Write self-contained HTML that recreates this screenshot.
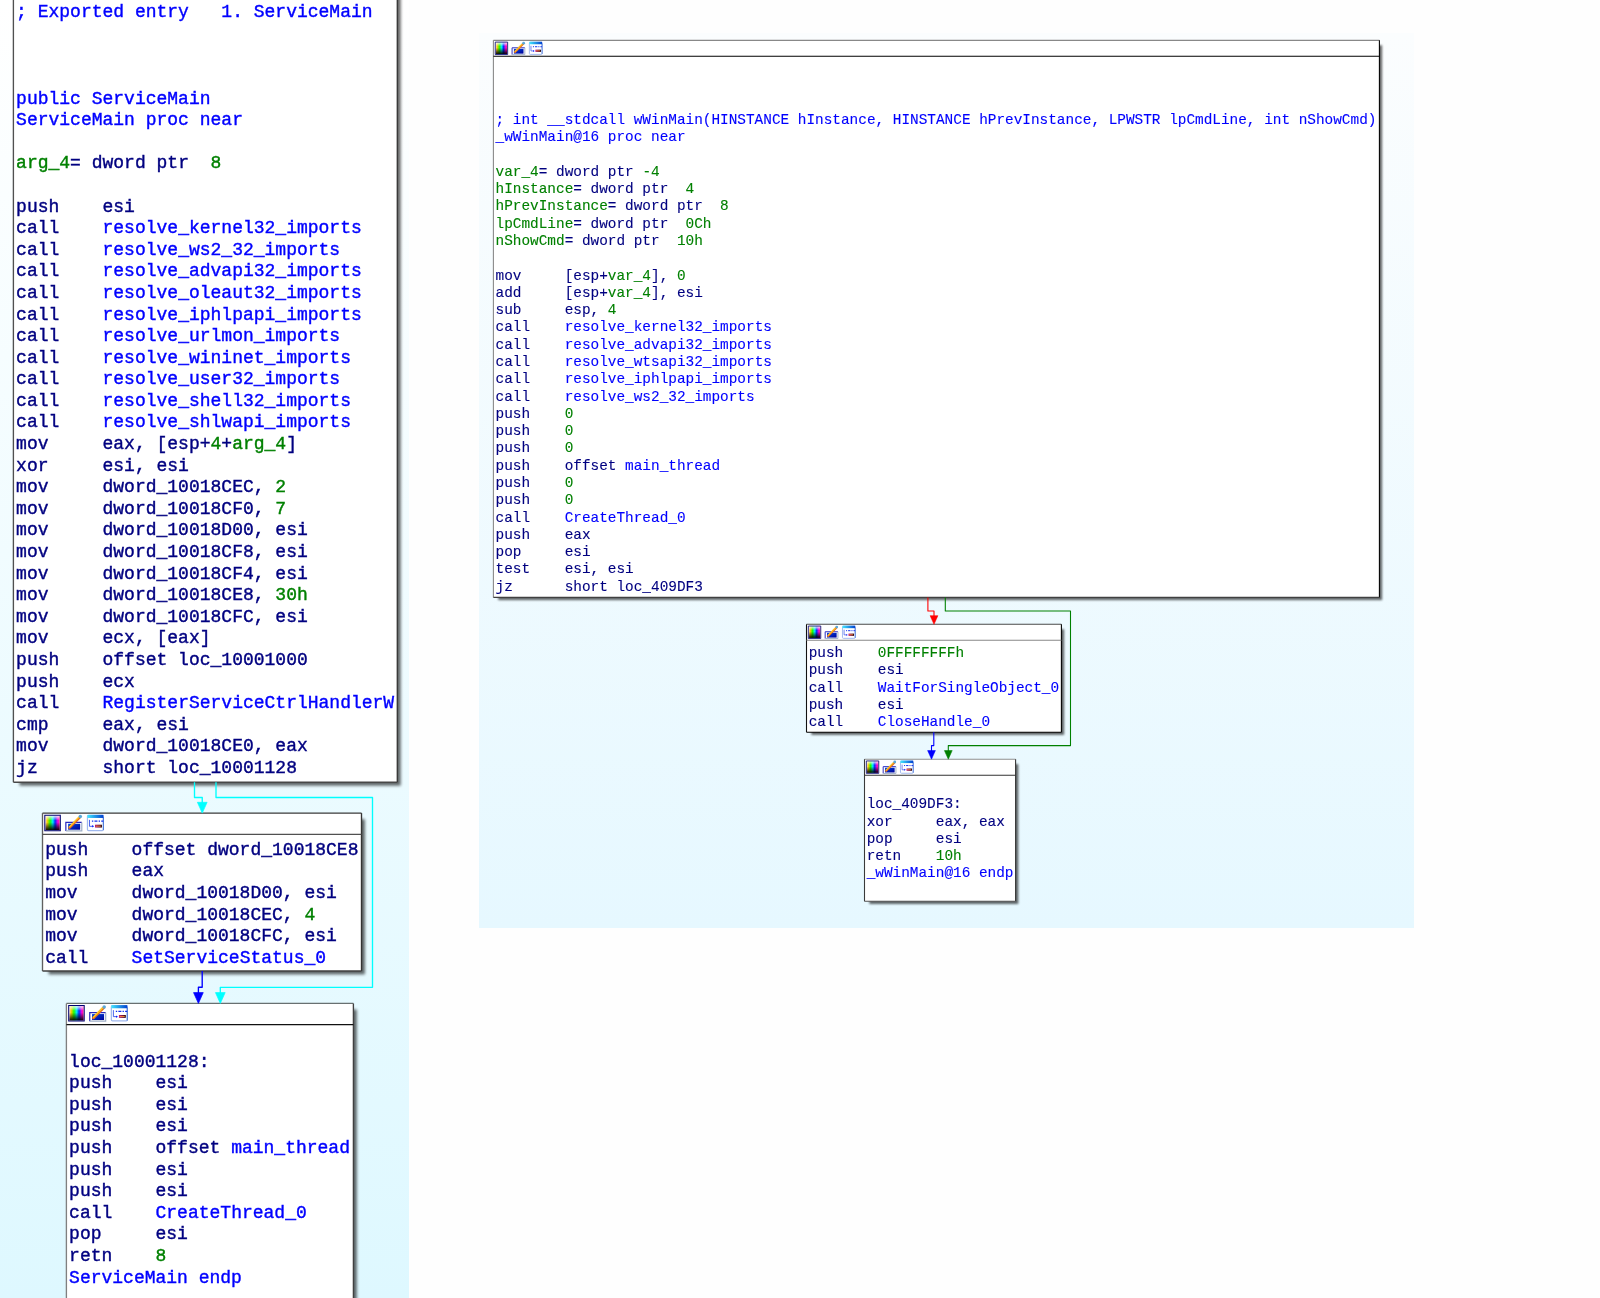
<!DOCTYPE html>
<html><head><meta charset="utf-8"><title>IDA graph</title>
<style>
html,body{margin:0;padding:0;}
body{width:1600px;height:1298px;overflow:hidden;background:#fefefe;position:relative;}
svg{position:absolute;left:0;top:0;}
.t{position:absolute;white-space:pre;font-family:"Liberation Mono",monospace;color:#000080;}
.bl{filter:blur(0.35px);}
.br{filter:blur(0.25px);}
</style></head><body>
<svg width="1600" height="1298" viewBox="0 0 1600 1298">
<defs>
<linearGradient id="hue" x1="0" y1="0" x2="1" y2="0">
<stop offset="0" stop-color="#f8d8c0"/><stop offset="0.12" stop-color="#ffd000"/><stop offset="0.32" stop-color="#20ff00"/>
<stop offset="0.52" stop-color="#00e8ff"/><stop offset="0.68" stop-color="#0030ff"/><stop offset="0.88" stop-color="#ff00e0"/><stop offset="1" stop-color="#ff2080"/>
</linearGradient>
<linearGradient id="shade" x1="0" y1="0" x2="0" y2="1">
<stop offset="0" stop-color="#fff" stop-opacity="0.85"/><stop offset="0.32" stop-color="#fff" stop-opacity="0"/><stop offset="0.45" stop-color="#000" stop-opacity="0"/><stop offset="1" stop-color="#000" stop-opacity="0.95"/>
</linearGradient>
<linearGradient id="editfill" x1="0" y1="0" x2="1" y2="1"><stop offset="0" stop-color="#0048e0"/><stop offset="1" stop-color="#000098"/></linearGradient>
<linearGradient id="titlebar" x1="0" y1="0" x2="1" y2="0"><stop offset="0" stop-color="#40e8ff"/><stop offset="1" stop-color="#0040d0"/></linearGradient>
<linearGradient id="barfill" x1="0" y1="0" x2="1" y2="0"><stop offset="0" stop-color="#c01080"/><stop offset="1" stop-color="#200000"/></linearGradient>
<filter id="blurL" x="-10%" y="-10%" width="120%" height="120%"><feGaussianBlur stdDeviation="1.35"/></filter>
<filter id="blurR" x="-10%" y="-10%" width="120%" height="120%"><feGaussianBlur stdDeviation="1.08"/></filter>
<linearGradient id="gl" x1="0" y1="0" x2="0" y2="1"><stop offset="0" stop-color="#ffffff"/><stop offset="1" stop-color="#def8ff"/></linearGradient>
<linearGradient id="gr" x1="0" y1="0" x2="0" y2="1"><stop offset="0" stop-color="#fbfdfe"/><stop offset="1" stop-color="#e6f8ff"/></linearGradient>
</defs>
<rect x="0" y="0" width="409" height="1298" fill="url(#gl)"/>
<rect x="479" y="33" width="935" height="895" fill="url(#gr)"/>
<rect x="19.48" y="-13.93" width="381.20" height="799.55" fill="#000" opacity="0.6" filter="url(#blurL)"/>
<rect x="13.40" y="-20.00" width="383.90" height="802.25" fill="#fff"/>
<path d="M13.40 -20.00 H397.30" stroke="#181818" stroke-width="1.35"/>
<path d="M13.40 -20.00 V782.25" stroke="#505050" stroke-width="1.35"/>
<path d="M397.30 -20.00 V782.25" stroke="#383838" stroke-width="1.35"/>
<path d="M13.40 782.25 H397.30" stroke="#484848" stroke-width="1.35"/>
<path d="M13.40 -5.00 H397.30" stroke="#181818" stroke-width="1.35"/>
<g transform="translate(13.40 -20.00) scale(1.3500)"><rect x="2.2" y="2.1" width="10.5" height="10.5" fill="url(#hue)"/><rect x="2.2" y="2.1" width="10.5" height="10.5" fill="url(#shade)"/><path d="M1.7 1.6 H13.2 V13.1 H1.7 Z" fill="none" stroke="#000070" stroke-width="0.75"/><rect x="17.3" y="6.9" width="12" height="6.4" fill="#ffffff"/><path d="M17.3 13.2 V6.9 H29.1" fill="none" stroke="#2828c0" stroke-width="0.9"/><path d="M29.1 6.9 V13.2 H17.3" fill="none" stroke="#a0b0c8" stroke-width="0.9"/><rect x="19.0" y="7.9" width="8.9" height="4.4" fill="url(#editfill)"/><path d="M20.0 10.8 L27.6 3.2" stroke="#e86a20" stroke-width="1.9" stroke-linecap="round"/><path d="M19.8 10.4 L27.0 3.0" stroke="#ffd020" stroke-width="1.0"/><circle cx="28.0" cy="2.6" r="1.3" fill="#5aa8d8"/><rect x="33.3" y="1.7" width="11.8" height="11.3" rx="0.8" fill="#ffffff" stroke="#a0b8ee" stroke-width="0.9"/><path d="M45.1 3 V12.6" stroke="#4a78d8" stroke-width="0.8"/><rect x="33.3" y="1.3" width="11.8" height="2.3" fill="url(#titlebar)"/><path d="M34.8 5.0 V9.8 H37.2" fill="none" stroke="#2040e8" stroke-width="0.6"/><path d="M36.8 8.9 L38.2 9.8 L36.8 10.7 Z" fill="#0010ff"/><path d="M36.6 5.9 H45" fill="none" stroke="#1030f0" stroke-width="0.9" stroke-dasharray="1.0 0.9 2.2 0.9"/><rect x="38.9" y="8.6" width="5.1" height="2.1" fill="url(#barfill)"/><path d="M39.4 9.65 H43.2" stroke="#f89838" stroke-width="0.7"/></g>
<rect x="48.58" y="819.18" width="316.30" height="155.20" fill="#000" opacity="0.6" filter="url(#blurL)"/>
<rect x="42.50" y="813.10" width="319.00" height="157.90" fill="#fff"/>
<path d="M42.50 813.10 H361.50" stroke="#3a3a3a" stroke-width="1.35"/>
<path d="M42.50 813.10 V971.00" stroke="#606060" stroke-width="1.35"/>
<path d="M361.50 813.10 V971.00" stroke="#333333" stroke-width="1.35"/>
<path d="M42.50 971.00 H361.50" stroke="#404040" stroke-width="1.35"/>
<path d="M42.50 834.40 H361.50" stroke="#505050" stroke-width="1.35"/>
<g transform="translate(42.50 813.10) scale(1.3500)"><rect x="2.2" y="2.1" width="10.5" height="10.5" fill="url(#hue)"/><rect x="2.2" y="2.1" width="10.5" height="10.5" fill="url(#shade)"/><path d="M1.7 1.6 H13.2 V13.1 H1.7 Z" fill="none" stroke="#000070" stroke-width="0.75"/><rect x="17.3" y="6.9" width="12" height="6.4" fill="#ffffff"/><path d="M17.3 13.2 V6.9 H29.1" fill="none" stroke="#2828c0" stroke-width="0.9"/><path d="M29.1 6.9 V13.2 H17.3" fill="none" stroke="#a0b0c8" stroke-width="0.9"/><rect x="19.0" y="7.9" width="8.9" height="4.4" fill="url(#editfill)"/><path d="M20.0 10.8 L27.6 3.2" stroke="#e86a20" stroke-width="1.9" stroke-linecap="round"/><path d="M19.8 10.4 L27.0 3.0" stroke="#ffd020" stroke-width="1.0"/><circle cx="28.0" cy="2.6" r="1.3" fill="#5aa8d8"/><rect x="33.3" y="1.7" width="11.8" height="11.3" rx="0.8" fill="#ffffff" stroke="#a0b8ee" stroke-width="0.9"/><path d="M45.1 3 V12.6" stroke="#4a78d8" stroke-width="0.8"/><rect x="33.3" y="1.3" width="11.8" height="2.3" fill="url(#titlebar)"/><path d="M34.8 5.0 V9.8 H37.2" fill="none" stroke="#2040e8" stroke-width="0.6"/><path d="M36.8 8.9 L38.2 9.8 L36.8 10.7 Z" fill="#0010ff"/><path d="M36.6 5.9 H45" fill="none" stroke="#1030f0" stroke-width="0.9" stroke-dasharray="1.0 0.9 2.2 0.9"/><rect x="38.9" y="8.6" width="5.1" height="2.1" fill="url(#barfill)"/><path d="M39.4 9.65 H43.2" stroke="#f89838" stroke-width="0.7"/></g>
<rect x="72.48" y="1009.48" width="284.30" height="313.90" fill="#000" opacity="0.6" filter="url(#blurL)"/>
<rect x="66.40" y="1003.40" width="287.00" height="316.60" fill="#fff"/>
<path d="M66.40 1003.40 H353.40" stroke="#687070" stroke-width="1.35"/>
<path d="M66.40 1003.40 V1320.00" stroke="#808080" stroke-width="1.35"/>
<path d="M353.40 1003.40 V1320.00" stroke="#404040" stroke-width="1.35"/>
<path d="M66.40 1320.00 H353.40" stroke="#181818" stroke-width="1.35"/>
<path d="M66.40 1024.60 H353.40" stroke="#111111" stroke-width="1.35"/>
<g transform="translate(66.40 1003.40) scale(1.3500)"><rect x="2.2" y="2.1" width="10.5" height="10.5" fill="url(#hue)"/><rect x="2.2" y="2.1" width="10.5" height="10.5" fill="url(#shade)"/><path d="M1.7 1.6 H13.2 V13.1 H1.7 Z" fill="none" stroke="#000070" stroke-width="0.75"/><rect x="17.3" y="6.9" width="12" height="6.4" fill="#ffffff"/><path d="M17.3 13.2 V6.9 H29.1" fill="none" stroke="#2828c0" stroke-width="0.9"/><path d="M29.1 6.9 V13.2 H17.3" fill="none" stroke="#a0b0c8" stroke-width="0.9"/><rect x="19.0" y="7.9" width="8.9" height="4.4" fill="url(#editfill)"/><path d="M20.0 10.8 L27.6 3.2" stroke="#e86a20" stroke-width="1.9" stroke-linecap="round"/><path d="M19.8 10.4 L27.0 3.0" stroke="#ffd020" stroke-width="1.0"/><circle cx="28.0" cy="2.6" r="1.3" fill="#5aa8d8"/><rect x="33.3" y="1.7" width="11.8" height="11.3" rx="0.8" fill="#ffffff" stroke="#a0b8ee" stroke-width="0.9"/><path d="M45.1 3 V12.6" stroke="#4a78d8" stroke-width="0.8"/><rect x="33.3" y="1.3" width="11.8" height="2.3" fill="url(#titlebar)"/><path d="M34.8 5.0 V9.8 H37.2" fill="none" stroke="#2040e8" stroke-width="0.6"/><path d="M36.8 8.9 L38.2 9.8 L36.8 10.7 Z" fill="#0010ff"/><path d="M36.6 5.9 H45" fill="none" stroke="#1030f0" stroke-width="0.9" stroke-dasharray="1.0 0.9 2.2 0.9"/><rect x="38.9" y="8.6" width="5.1" height="2.1" fill="url(#barfill)"/><path d="M39.4 9.65 H43.2" stroke="#f89838" stroke-width="0.7"/></g>
<rect x="498.26" y="45.22" width="883.84" height="554.88" fill="#000" opacity="0.6" filter="url(#blurR)"/>
<rect x="493.40" y="40.36" width="886.00" height="557.04" fill="#fff"/>
<path d="M493.40 40.36 H1379.40" stroke="#888888" stroke-width="1.08"/>
<path d="M493.40 40.36 V597.40" stroke="#888888" stroke-width="1.08"/>
<path d="M1379.40 40.36 V597.40" stroke="#000000" stroke-width="1.08"/>
<path d="M493.40 597.40 H1379.40" stroke="#404040" stroke-width="1.08"/>
<path d="M493.40 56.30 H1379.40" stroke="#000000" stroke-width="1.08"/>
<g transform="translate(493.40 40.36) scale(1.0800)"><rect x="2.2" y="2.1" width="10.5" height="10.5" fill="url(#hue)"/><rect x="2.2" y="2.1" width="10.5" height="10.5" fill="url(#shade)"/><path d="M1.7 1.6 H13.2 V13.1 H1.7 Z" fill="none" stroke="#000070" stroke-width="0.75"/><rect x="17.3" y="6.9" width="12" height="6.4" fill="#ffffff"/><path d="M17.3 13.2 V6.9 H29.1" fill="none" stroke="#2828c0" stroke-width="0.9"/><path d="M29.1 6.9 V13.2 H17.3" fill="none" stroke="#a0b0c8" stroke-width="0.9"/><rect x="19.0" y="7.9" width="8.9" height="4.4" fill="url(#editfill)"/><path d="M20.0 10.8 L27.6 3.2" stroke="#e86a20" stroke-width="1.9" stroke-linecap="round"/><path d="M19.8 10.4 L27.0 3.0" stroke="#ffd020" stroke-width="1.0"/><circle cx="28.0" cy="2.6" r="1.3" fill="#5aa8d8"/><rect x="33.3" y="1.7" width="11.8" height="11.3" rx="0.8" fill="#ffffff" stroke="#a0b8ee" stroke-width="0.9"/><path d="M45.1 3 V12.6" stroke="#4a78d8" stroke-width="0.8"/><rect x="33.3" y="1.3" width="11.8" height="2.3" fill="url(#titlebar)"/><path d="M34.8 5.0 V9.8 H37.2" fill="none" stroke="#2040e8" stroke-width="0.6"/><path d="M36.8 8.9 L38.2 9.8 L36.8 10.7 Z" fill="#0010ff"/><path d="M36.6 5.9 H45" fill="none" stroke="#1030f0" stroke-width="0.9" stroke-dasharray="1.0 0.9 2.2 0.9"/><rect x="38.9" y="8.6" width="5.1" height="2.1" fill="url(#barfill)"/><path d="M39.4 9.65 H43.2" stroke="#f89838" stroke-width="0.7"/></g>
<rect x="811.36" y="629.16" width="252.74" height="105.74" fill="#000" opacity="0.6" filter="url(#blurR)"/>
<rect x="806.50" y="624.30" width="254.90" height="107.90" fill="#fff"/>
<path d="M806.50 624.30 H1061.40" stroke="#4a4a4a" stroke-width="1.08"/>
<path d="M806.50 624.30 V732.20" stroke="#111111" stroke-width="1.08"/>
<path d="M1061.40 624.30 V732.20" stroke="#000000" stroke-width="1.08"/>
<path d="M806.50 732.20 H1061.40" stroke="#000000" stroke-width="1.08"/>
<path d="M806.50 640.30 H1061.40" stroke="#888888" stroke-width="1.08"/>
<g transform="translate(806.50 624.30) scale(1.0800)"><rect x="2.2" y="2.1" width="10.5" height="10.5" fill="url(#hue)"/><rect x="2.2" y="2.1" width="10.5" height="10.5" fill="url(#shade)"/><path d="M1.7 1.6 H13.2 V13.1 H1.7 Z" fill="none" stroke="#000070" stroke-width="0.75"/><rect x="17.3" y="6.9" width="12" height="6.4" fill="#ffffff"/><path d="M17.3 13.2 V6.9 H29.1" fill="none" stroke="#2828c0" stroke-width="0.9"/><path d="M29.1 6.9 V13.2 H17.3" fill="none" stroke="#a0b0c8" stroke-width="0.9"/><rect x="19.0" y="7.9" width="8.9" height="4.4" fill="url(#editfill)"/><path d="M20.0 10.8 L27.6 3.2" stroke="#e86a20" stroke-width="1.9" stroke-linecap="round"/><path d="M19.8 10.4 L27.0 3.0" stroke="#ffd020" stroke-width="1.0"/><circle cx="28.0" cy="2.6" r="1.3" fill="#5aa8d8"/><rect x="33.3" y="1.7" width="11.8" height="11.3" rx="0.8" fill="#ffffff" stroke="#a0b8ee" stroke-width="0.9"/><path d="M45.1 3 V12.6" stroke="#4a78d8" stroke-width="0.8"/><rect x="33.3" y="1.3" width="11.8" height="2.3" fill="url(#titlebar)"/><path d="M34.8 5.0 V9.8 H37.2" fill="none" stroke="#2040e8" stroke-width="0.6"/><path d="M36.8 8.9 L38.2 9.8 L36.8 10.7 Z" fill="#0010ff"/><path d="M36.6 5.9 H45" fill="none" stroke="#1030f0" stroke-width="0.9" stroke-dasharray="1.0 0.9 2.2 0.9"/><rect x="38.9" y="8.6" width="5.1" height="2.1" fill="url(#barfill)"/><path d="M39.4 9.65 H43.2" stroke="#f89838" stroke-width="0.7"/></g>
<rect x="869.36" y="764.06" width="148.94" height="139.94" fill="#000" opacity="0.6" filter="url(#blurR)"/>
<rect x="864.50" y="759.20" width="151.10" height="142.10" fill="#fff"/>
<path d="M864.50 759.20 H1015.60" stroke="#909090" stroke-width="1.08"/>
<path d="M864.50 759.20 V901.30" stroke="#3a3a3a" stroke-width="1.08"/>
<path d="M1015.60 759.20 V901.30" stroke="#333333" stroke-width="1.08"/>
<path d="M864.50 901.30 H1015.60" stroke="#505050" stroke-width="1.08"/>
<path d="M864.50 775.20 H1015.60" stroke="#333333" stroke-width="1.08"/>
<g transform="translate(864.50 759.20) scale(1.0800)"><rect x="2.2" y="2.1" width="10.5" height="10.5" fill="url(#hue)"/><rect x="2.2" y="2.1" width="10.5" height="10.5" fill="url(#shade)"/><path d="M1.7 1.6 H13.2 V13.1 H1.7 Z" fill="none" stroke="#000070" stroke-width="0.75"/><rect x="17.3" y="6.9" width="12" height="6.4" fill="#ffffff"/><path d="M17.3 13.2 V6.9 H29.1" fill="none" stroke="#2828c0" stroke-width="0.9"/><path d="M29.1 6.9 V13.2 H17.3" fill="none" stroke="#a0b0c8" stroke-width="0.9"/><rect x="19.0" y="7.9" width="8.9" height="4.4" fill="url(#editfill)"/><path d="M20.0 10.8 L27.6 3.2" stroke="#e86a20" stroke-width="1.9" stroke-linecap="round"/><path d="M19.8 10.4 L27.0 3.0" stroke="#ffd020" stroke-width="1.0"/><circle cx="28.0" cy="2.6" r="1.3" fill="#5aa8d8"/><rect x="33.3" y="1.7" width="11.8" height="11.3" rx="0.8" fill="#ffffff" stroke="#a0b8ee" stroke-width="0.9"/><path d="M45.1 3 V12.6" stroke="#4a78d8" stroke-width="0.8"/><rect x="33.3" y="1.3" width="11.8" height="2.3" fill="url(#titlebar)"/><path d="M34.8 5.0 V9.8 H37.2" fill="none" stroke="#2040e8" stroke-width="0.6"/><path d="M36.8 8.9 L38.2 9.8 L36.8 10.7 Z" fill="#0010ff"/><path d="M36.6 5.9 H45" fill="none" stroke="#1030f0" stroke-width="0.9" stroke-dasharray="1.0 0.9 2.2 0.9"/><rect x="38.9" y="8.6" width="5.1" height="2.1" fill="url(#barfill)"/><path d="M39.4 9.65 H43.2" stroke="#f89838" stroke-width="0.7"/></g>
<polyline points="194.50,782.30 194.50,797.50 202.25,797.50 202.25,803.30" fill="none" stroke="#00ffff" stroke-width="1.35" stroke-linejoin="round"/>
<path d="M197.39 802.30 L207.11 802.30 L202.25 813.10 Z" fill="#00ffff" stroke="#00ffff" stroke-width="0.68" stroke-linejoin="round"/>
<polyline points="216.00,782.30 216.00,797.50 372.50,797.50 372.50,987.30 220.30,987.30 220.30,993.60" fill="none" stroke="#00ffff" stroke-width="1.35" stroke-linejoin="round"/>
<path d="M215.44 992.60 L225.16 992.60 L220.30 1003.40 Z" fill="#00ffff" stroke="#00ffff" stroke-width="0.68" stroke-linejoin="round"/>
<polyline points="202.20,971.00 202.20,987.20 198.40,987.20 198.40,993.60" fill="none" stroke="#0000ff" stroke-width="1.35" stroke-linejoin="round"/>
<path d="M193.54 992.60 L203.26 992.60 L198.40 1003.40 Z" fill="#0000ff" stroke="#0000ff" stroke-width="0.68" stroke-linejoin="round"/>
<polyline points="927.90,597.40 927.90,611.00 934.00,611.00 934.00,616.66" fill="none" stroke="#ff0000" stroke-width="1.08" stroke-linejoin="round"/>
<path d="M930.11 615.66 L937.89 615.66 L934.00 624.30 Z" fill="#ff0000" stroke="#ff0000" stroke-width="0.54" stroke-linejoin="round"/>
<polyline points="945.30,597.40 945.30,611.00 1070.50,611.00 1070.50,745.60 948.30,745.60 948.30,751.56" fill="none" stroke="#008000" stroke-width="1.08" stroke-linejoin="round"/>
<path d="M944.41 750.56 L952.19 750.56 L948.30 759.20 Z" fill="#008000" stroke="#008000" stroke-width="0.54" stroke-linejoin="round"/>
<polyline points="933.80,732.20 933.80,745.60 931.50,745.60 931.50,751.56" fill="none" stroke="#0000ff" stroke-width="1.08" stroke-linejoin="round"/>
<path d="M927.61 750.56 L935.39 750.56 L931.50 759.20 Z" fill="#0000ff" stroke="#0000ff" stroke-width="0.54" stroke-linejoin="round"/>
</svg>
<div class="t bl" style="left:16.10px;top:2.21px;font-size:18.000px;line-height:21.600px;font-weight:normal;-webkit-text-stroke:0.40px"><span style="color:#0000ff">; Exported entry   1. ServiceMain</span>



<span style="color:#0000ff">public ServiceMain</span>
<span style="color:#0000ff">ServiceMain proc near</span>

<span style="color:#008000">arg_4</span>= dword ptr  <span style="color:#008000">8</span>

push    esi
call    <span style="color:#0000ff">resolve_kernel32_imports</span>
call    <span style="color:#0000ff">resolve_ws2_32_imports</span>
call    <span style="color:#0000ff">resolve_advapi32_imports</span>
call    <span style="color:#0000ff">resolve_oleaut32_imports</span>
call    <span style="color:#0000ff">resolve_iphlpapi_imports</span>
call    <span style="color:#0000ff">resolve_urlmon_imports</span>
call    <span style="color:#0000ff">resolve_wininet_imports</span>
call    <span style="color:#0000ff">resolve_user32_imports</span>
call    <span style="color:#0000ff">resolve_shell32_imports</span>
call    <span style="color:#0000ff">resolve_shlwapi_imports</span>
mov     eax, [esp+<span style="color:#008000">4</span>+<span style="color:#008000">arg_4</span>]
xor     esi, esi
mov     dword_10018CEC, <span style="color:#008000">2</span>
mov     dword_10018CF0, <span style="color:#008000">7</span>
mov     dword_10018D00, esi
mov     dword_10018CF8, esi
mov     dword_10018CF4, esi
mov     dword_10018CE8, <span style="color:#008000">30h</span>
mov     dword_10018CFC, esi
mov     ecx, [eax]
push    offset loc_10001000
push    ecx
call    <span style="color:#0000ff">RegisterServiceCtrlHandlerW</span>
cmp     eax, esi
mov     dword_10018CE0, eax
jz      short loc_10001128</div>
<div class="t bl" style="left:45.20px;top:839.81px;font-size:18.000px;line-height:21.600px;font-weight:normal;-webkit-text-stroke:0.40px">push    offset dword_10018CE8
push    eax
mov     dword_10018D00, esi
mov     dword_10018CEC, <span style="color:#008000">4</span>
mov     dword_10018CFC, esi
call    <span style="color:#0000ff">SetServiceStatus_0</span></div>
<div class="t bl" style="left:69.10px;top:1030.01px;font-size:18.000px;line-height:21.600px;font-weight:normal;-webkit-text-stroke:0.40px">
loc_10001128:
push    esi
push    esi
push    esi
push    offset <span style="color:#0000ff">main_thread</span>
push    esi
push    esi
call    <span style="color:#0000ff">CreateThread_0</span>
pop     esi
retn    <span style="color:#008000">8</span>
<span style="color:#0000ff">ServiceMain endp</span></div>
<div class="t br" style="left:495.56px;top:60.19px;font-size:14.400px;line-height:17.280px;font-weight:normal;-webkit-text-stroke:0.12px">


<span style="color:#0000ff">; int __stdcall wWinMain(HINSTANCE hInstance, HINSTANCE hPrevInstance, LPWSTR lpCmdLine, int nShowCmd)</span>
<span style="color:#0000ff">_wWinMain@16 proc near</span>

<span style="color:#008000">var_4</span>= dword ptr <span style="color:#008000">-4</span>
<span style="color:#008000">hInstance</span>= dword ptr  <span style="color:#008000">4</span>
<span style="color:#008000">hPrevInstance</span>= dword ptr  <span style="color:#008000">8</span>
<span style="color:#008000">lpCmdLine</span>= dword ptr  <span style="color:#008000">0Ch</span>
<span style="color:#008000">nShowCmd</span>= dword ptr  <span style="color:#008000">10h</span>

mov     [esp+<span style="color:#008000">var_4</span>], <span style="color:#008000">0</span>
add     [esp+<span style="color:#008000">var_4</span>], esi
sub     esp, <span style="color:#008000">4</span>
call    <span style="color:#0000ff">resolve_kernel32_imports</span>
call    <span style="color:#0000ff">resolve_advapi32_imports</span>
call    <span style="color:#0000ff">resolve_wtsapi32_imports</span>
call    <span style="color:#0000ff">resolve_iphlpapi_imports</span>
call    <span style="color:#0000ff">resolve_ws2_32_imports</span>
push    <span style="color:#008000">0</span>
push    <span style="color:#008000">0</span>
push    <span style="color:#008000">0</span>
push    offset <span style="color:#0000ff">main_thread</span>
push    <span style="color:#008000">0</span>
push    <span style="color:#008000">0</span>
call    <span style="color:#0000ff">CreateThread_0</span>
push    eax
pop     esi
test    esi, esi
jz      short loc_409DF3</div>
<div class="t br" style="left:808.66px;top:645.13px;font-size:14.400px;line-height:17.280px;font-weight:normal;-webkit-text-stroke:0.12px">push    <span style="color:#008000">0FFFFFFFFh</span>
push    esi
call    <span style="color:#0000ff">WaitForSingleObject_0</span>
push    esi
call    <span style="color:#0000ff">CloseHandle_0</span></div>
<div class="t br" style="left:866.66px;top:779.08px;font-size:14.400px;line-height:17.280px;font-weight:normal;-webkit-text-stroke:0.12px">
loc_409DF3:
xor     eax, eax
pop     esi
retn    <span style="color:#008000">10h</span>
<span style="color:#0000ff">_wWinMain@16 endp</span></div>
</body></html>
